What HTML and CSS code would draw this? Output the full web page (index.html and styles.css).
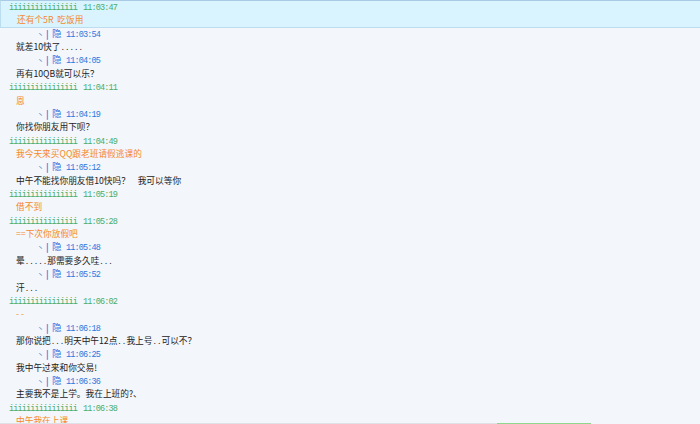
FILE: index.html
```html
<!DOCTYPE html>
<html lang="zh-CN">

<head>
  <meta charset="UTF-8">
  <meta name="viewport" content="width=device-width, initial-scale=1.0">
  <title>消息记录</title>
  <link rel="stylesheet" href="styles.css">
</head>

<body>
  <div class="log">
    <div class="msg other current">
      <div class="head"><span class="nick">iiiiiiiiiiiiiiii</span><span class="time">11:03:47</span></div>
      <div class="body">还有个5R&nbsp;&nbsp;吃饭用</div>
    </div>
    <div class="msg self">
      <div class="head"><span class="mark">丶</span><span class="bar">|</span><span class="name">隐</span><span class="time">11:03:54</span></div>
      <div class="body">就差10快了<span class="dots">.....</span></div>
    </div>
    <div class="msg self">
      <div class="head"><span class="mark">丶</span><span class="bar">|</span><span class="name">隐</span><span class="time">11:04:05</span></div>
      <div class="body">再有10QB就可以乐？</div>
    </div>
    <div class="msg other">
      <div class="head"><span class="nick">iiiiiiiiiiiiiiii</span><span class="time">11:04:11</span></div>
      <div class="body">恩</div>
    </div>
    <div class="msg self">
      <div class="head"><span class="mark">丶</span><span class="bar">|</span><span class="name">隐</span><span class="time">11:04:19</span></div>
      <div class="body">你找你朋友用下呗？</div>
    </div>
    <div class="msg other">
      <div class="head"><span class="nick">iiiiiiiiiiiiiiii</span><span class="time">11:04:49</span></div>
      <div class="body">我今天来买QQ跟老班请假逃课的</div>
    </div>
    <div class="msg self">
      <div class="head"><span class="mark">丶</span><span class="bar">|</span><span class="name">隐</span><span class="time">11:05:12</span></div>
      <div class="body">中午不能找你朋友借10快吗？&nbsp;&nbsp;&nbsp;&nbsp;我可以等你</div>
    </div>
    <div class="msg other">
      <div class="head"><span class="nick">iiiiiiiiiiiiiiii</span><span class="time">11:05:19</span></div>
      <div class="body">借不到</div>
    </div>
    <div class="msg other">
      <div class="head"><span class="nick">iiiiiiiiiiiiiiii</span><span class="time">11:05:28</span></div>
      <div class="body">==下次你放假吧</div>
    </div>
    <div class="msg self">
      <div class="head"><span class="mark">丶</span><span class="bar">|</span><span class="name">隐</span><span class="time">11:05:48</span></div>
      <div class="body">晕<span class="dots">.....</span>那需要多久哇<span class="dots">...</span></div>
    </div>
    <div class="msg self">
      <div class="head"><span class="mark">丶</span><span class="bar">|</span><span class="name">隐</span><span class="time">11:05:52</span></div>
      <div class="body">汗<span class="dots">...</span></div>
    </div>
    <div class="msg other">
      <div class="head"><span class="nick">iiiiiiiiiiiiiiii</span><span class="time">11:06:02</span></div>
      <div class="body">-&nbsp;-</div>
    </div>
    <div class="msg self">
      <div class="head"><span class="mark">丶</span><span class="bar">|</span><span class="name">隐</span><span class="time">11:06:18</span></div>
      <div class="body">那你说把<span class="dots">...</span>明天中午12点<span class="dots">..</span>我上号<span class="dots">..</span>可以不？</div>
    </div>
    <div class="msg self">
      <div class="head"><span class="mark">丶</span><span class="bar">|</span><span class="name">隐</span><span class="time">11:06:25</span></div>
      <div class="body">我中午过来和你交易!</div>
    </div>
    <div class="msg self">
      <div class="head"><span class="mark">丶</span><span class="bar">|</span><span class="name">隐</span><span class="time">11:06:36</span></div>
      <div class="body">主要我不是上学。我在上班的?、</div>
    </div>
    <div class="msg other">
      <div class="head"><span class="nick">iiiiiiiiiiiiiiii</span><span class="time">11:06:38</span></div>
      <div class="body">中午我在上课</div>
    </div>
  </div>
  <div class="scroll">
    <div class="track"></div>
    <div class="thumb"></div>
  </div>
</body>

</html>
```

FILE: styles.css
```css
body {
  margin: 0;
  height: 424px;
  overflow: hidden;
  background: #f3f6fa;
  font-family: "Noto Sans CJK SC", sans-serif;
  font-size: 8.7px;
}

.log {
  height: 423px;
  overflow: hidden;
}

/* chaque ligne a une hauteur fixe */
.msg .head,
.msg .body {
  height: 13.36px;
  line-height: 13.36px;
  white-space: nowrap;
}

.msg span {
  line-height: 1;
}

.msg .body {
  padding-left: 16px;
}

.other .head {
  padding-left: 9px;
  color: #49ad68;
}

.other .body {
  color: #f5892a;
}

.self .head {
  padding-left: 37px;
  color: #2b78e0;
}

.self .body {
  color: #222;
}

.nick,
.time,
.dots {
  font-family: "Liberation Mono", monospace;
  font-size: 8.5px;
  letter-spacing: -0.85px;
}

.time {
  margin-left: 6px;
}

.dots {
  letter-spacing: 0;
  font-size: 7.5px;
}

.mark {
  display: inline-block;
  width: 9px;
  color: #5a8fd0;
  font-size: 7px;
}

.bar {
  display: inline-block;
  width: 6px;
  font-weight: bold;
}

.name {
  display: inline-block;
  width: 9px;
  font-size: 9.5px;
}

.self .time {
  margin-left: 5px;
}

.current {
  background: #d9f3ff;
  border-top: 1px solid #a9cae4;
  border-bottom: 1px solid #bcdcf0;
  border-left: 1px solid #bcdcf0;
  margin-bottom: -1px;
}

.current .head {
  padding-left: 8px;
  margin-top: -1px;
}

.scroll {
  display: flex;
  height: 1px;
}

.track {
  width: 497px;
  background: #dde2e8;
}

.thumb {
  width: 94px;
  background: #8fd68f;
}
```
